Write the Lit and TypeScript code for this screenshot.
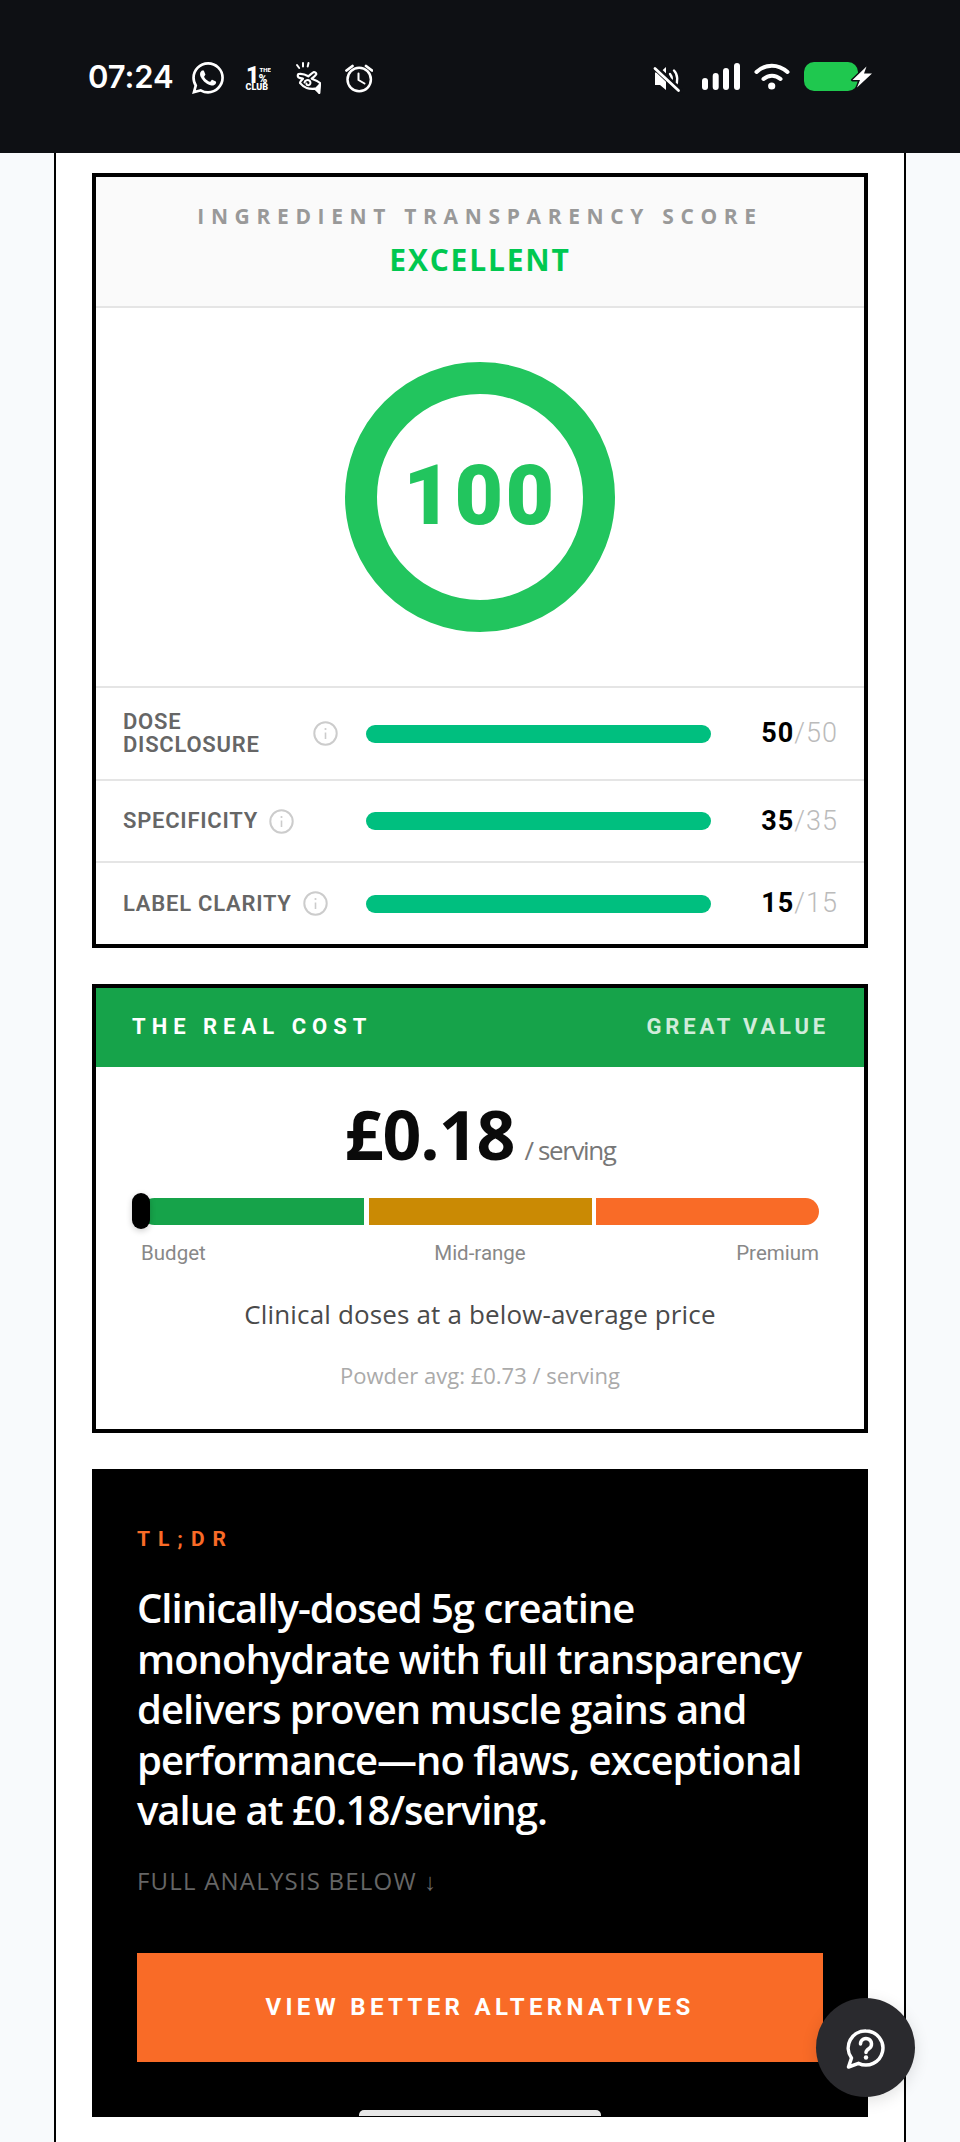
import { LitElement, html, css } from "lit";
import { customElement } from "lit/decorators.js";

const info = html`<svg class="info" viewBox="0 0 25 25"><circle cx="12.5" cy="12.5" r="11.2" fill="none" stroke="#ccc" stroke-width="2"/><circle cx="12.5" cy="8" r="1.1" fill="#ccc"/><path d="M12.5 11.5v6.5" stroke="#ccc" stroke-width="1.6"/></svg>`;

const rows = [
  { label: "DOSE DISCLOSURE", v: 50 },
  { label: "SPECIFICITY", v: 35 },
  { label: "LABEL CLARITY", v: 15 },
];

@customElement("app-root")
export class AppRoot extends LitElement {
  static styles = css`
    :host { display: block; position: relative; height: 2142px; overflow: hidden; background: #f8fafc; font-family: "Open Sans", sans-serif; }
    * { box-sizing: border-box; }
    .status { height: 153px; background: #0e1014; display: flex; justify-content: space-between; padding: 60px 88px 0 88px; align-items: flex-start; color: #fff; }
    .status-left { display: flex; align-items: flex-start; gap: 19px; }
    .status svg { height: 34px; display: block; }
    .time { font: 600 31px/34px Inter, sans-serif; width: 85px; white-space: nowrap; letter-spacing: -0.1px; }
    .page { margin: 0 54px; height: 1989px; border-left: 2px solid #000; border-right: 2px solid #000; background: #fff; padding: 20px 36px 0; display: flex; flex-direction: column; gap: 36px; }
    .card { border: 4px solid #000; background: #fff; }
    .score-head { height: 131px; background: #fafafa; border-bottom: 2px solid #e5e5e5; display: flex; flex-direction: column; align-items: center; padding-top: 24px; }
    .score-title { font-size: 21px; line-height: 30px; font-weight: 700; letter-spacing: 6.65px; color: #999; white-space: nowrap; }
    .score-grade { font-size: 30px; line-height: 40px; margin-top: 9px; font-weight: 700; letter-spacing: 1.8px; color: #00c850; }
    .ring-wrap { height: 378px; display: flex; align-items: center; justify-content: center; }
    .ring { width: 270px; height: 270px; border-radius: 50%; border: 32px solid #22c55e; display: flex; align-items: center; justify-content: center; font: 900 84px/1 Roboto, sans-serif; letter-spacing: 2.5px; color: #22c55e; padding-bottom: 3px; }
    .row { min-height: 82px; border-top: 2px solid #e5e5e5; padding: 22px 27px; display: flex; align-items: center; }
    .row:last-child { min-height: 83px; }
    .row-label { width: 215px; display: flex; align-items: center; gap: 11px; flex: none; }
    .row-name { font: 600 22px/23px Roboto, sans-serif; color: #666; letter-spacing: 0.75px; padding-bottom: 1px; }
    .info { width: 25px; height: 25px; flex: none; display: block; }
    .track { width: 345px; height: 18px; border-radius: 9px; background: #00bf7f; margin-left: 28px; flex: none; }
    .row-score { flex: 1; text-align: right; font: 700 27px/30px Roboto, sans-serif; letter-spacing: 1px; color: #000; margin-right: -1px; padding-bottom: 1px; }
    .row-score span { font-weight: 300; color: #bbb; }
    .cost-head { height: 79px; background: #16a34a; display: flex; justify-content: space-between; align-items: center; padding: 0 35px 2px 36px; font: 700 22px/1 Roboto, sans-serif; color: #fff; }
    .cost-head .l { letter-spacing: 6px; }
    .cost-head .r { letter-spacing: 3.84px; opacity: 0.8; }
    .cost-body { height: 362px; display: flex; flex-direction: column; align-items: center; }
    .price { margin-top: 27px; display: flex; align-items: baseline; gap: 10px; height: 80px; }
    .price b { font-size: 68px; line-height: 80px; font-weight: 700; letter-spacing: -1px; color: #0a0a0a; }
    .price span { font-size: 26px; color: #777; letter-spacing: -1.4px; }
    .scale { position: relative; margin-top: 24px; width: 678px; height: 27px; display: flex; gap: 4.5px; }
    .seg { flex: 1; }
    .seg.a { background: #16a34a; border-radius: 14px 0 0 14px; }
    .seg.b { background: #ca8a04; }
    .seg.c { background: #f96b27; border-radius: 0 14px 14px 0; }
    .marker { position: absolute; left: -9px; top: -5px; width: 18px; height: 36px; border-radius: 9px; background: #000; box-shadow: 0 2px 6px rgba(0,0,0,.2); }
    .scale-labels { width: 678px; margin-top: 15px; display: grid; grid-template-columns: 1fr auto 1fr; font: 400 20.5px/26px Roboto, sans-serif; color: #888; }
    .scale-labels span:last-child { text-align: right; }
    .note { margin-top: 30px; font-size: 26px; line-height: 36px; color: #4a4a4a; letter-spacing: 0.15px; }
    .avg { margin-top: 28px; font-size: 22px; line-height: 30px; color: #aaa; }
    .tldr { background: #000; height: 648px; padding: 0 45px; display: flex; flex-direction: column; color: #fff; }
    .kicker { margin-top: 56px; font: 700 21px/28px Roboto, sans-serif; letter-spacing: 8px; color: #f96b27; }
    .headline { margin: 30px 0 0; font-size: 40px; line-height: 50.5px; font-weight: 600; letter-spacing: -1px; }
    .more { margin-top: 29px; font: 500 24px/32px "Open Sans", sans-serif; letter-spacing: 1.2px; color: #666; }
    .cta { margin-top: 56px; height: 109px; background: #f96b27; display: flex; align-items: center; justify-content: center; font: 700 24px/1 Roboto, sans-serif; letter-spacing: 4.34px; color: #fff; flex: none; }
    .chat { position: absolute; left: 816px; top: 1998px; width: 99px; height: 99px; border-radius: 50%; background: #2a2a2e; box-shadow: 0 4px 16px rgba(0,0,0,.12); display: flex; align-items: center; justify-content: center; }
    .chat svg { width: 48px; height: 48px; display: block; }
    .home { position: absolute; left: 359px; top: 2110px; width: 242px; height: 6px; border-radius: 5px 5px 0 0; background: #e8e8e8; }
  `;

  render() {
    return html`
      <div class="status">
        <div class="status-left">
          <span class="time">07:24</span>
          <svg viewBox="192 60 32 34" style="width:32px"><g transform="translate(192 62) scale(1.3333)"><path fill="#fff" d="M17.472 14.382c-.297-.149-1.758-.867-2.03-.967-.273-.099-.471-.148-.67.15-.197.297-.767.966-.94 1.164-.173.199-.347.223-.644.075-.297-.15-1.255-.463-2.39-1.475-.883-.788-1.48-1.761-1.653-2.059-.173-.297-.018-.458.13-.606.134-.133.298-.347.446-.52.149-.174.198-.298.298-.497.099-.198.05-.371-.025-.52-.075-.149-.669-1.612-.916-2.207-.242-.579-.487-.5-.669-.51-.173-.008-.371-.01-.57-.01-.198 0-.52.074-.792.372-.272.297-1.04 1.016-1.04 2.479 0 1.462 1.065 2.875 1.213 3.074.149.198 2.096 3.2 5.077 4.487.709.306 1.262.489 1.694.625.712.227 1.36.195 1.871.118.571-.085 1.758-.719 2.006-1.413.248-.694.248-1.289.173-1.413-.074-.124-.272-.198-.57-.347m-5.421 7.403h-.004a9.87 9.87 0 01-5.031-1.378l-.361-.214-3.741.982.998-3.648-.235-.374a9.86 9.86 0 01-1.51-5.26c.001-5.45 4.436-9.884 9.888-9.884 2.64 0 5.122 1.03 6.988 2.898a9.825 9.825 0 012.893 6.994c-.003 5.45-4.437 9.884-9.885 9.884m8.413-18.297A11.815 11.815 0 0012.05 0C5.495 0 .16 5.335.157 11.892c0 2.096.547 4.142 1.588 5.945L.057 24l6.305-1.654a11.882 11.882 0 005.683 1.448h.005c6.554 0 11.89-5.335 11.893-11.893a11.821 11.821 0 00-3.48-8.413z"/></g></svg>
          <svg viewBox="243 60 28 34" style="width:28px">
            <g fill="#fff" font-family="Roboto, sans-serif" font-weight="900">
              <text x="246" y="82.500" font-size="23">1</text>
              <text x="259.500" y="71.500" font-size="6">THE</text>
              <text x="258.500" y="82.500" font-size="12">%</text>
              <text x="245.500" y="90" font-size="9">CLUB</text>
            </g>
          </svg>
          <svg viewBox="290 60 31 34" style="width:31px">
            <g fill="none" stroke="#fff" stroke-linecap="round" stroke-linejoin="round">
              <path d="M297 65l2.200 3M303 63v3.500M308.500 63l-.8 3.500" stroke-width="2"/>
              <path d="M298.300 74c3-.6 7 .4 10 2.300 2-1.500 4-3.600 5.700-4.300 2 .2 2.600 1.800 2 2.700-1.200 1.600-3 3-4.300 4 2.800 1 6 2.200 8.300 4.300-.2 3.300-.4 6.500-.7 10-1.500-1.700-3.200-3.300-4.300-4.300-3 .2-6 .1-8.300-.7-3.500-1-5.300-3.300-6.700-5 .2-1.500 1.600-3 3-4.300-2-.3-3.800-.9-4.700-1.400-.6-1-.6-2.300 0-3.300z" stroke-width="2.200"/>
              <path d="M304.500 82.500c.4-2.400 3.600-3.200 5.300-1.500 1.400 1.600.6 4-1.500 4.300-1.200.1-2-.7-1.800-1.700" stroke-width="2"/>
            </g>
            <path d="M315 88l4.500-4.500 1 2-1 7.500z" fill="#fff"/>
          </svg>
          <svg viewBox="339 60 33 34" style="width:33px">
            <g fill="none" stroke="#fff" stroke-linecap="round" stroke-linejoin="round">
              <circle cx="358.200" cy="79.500" r="11.700" stroke-width="2.500"/>
              <path d="M357.500 73.500v6.500l6 3.500" stroke-width="2"/>
              <path d="M345.500 70.500l6-4.500M371 70.500l-6-4.500" stroke-width="2.800"/>
            </g>
          </svg>
        </div>
        <svg viewBox="650 60 222 34" style="width:222px">
          <path d="M655 72.500h5l6-5.500v23l-6-5h-5z" fill="#fff"/>
          <g fill="none" stroke="#fff" stroke-linecap="round">
            <path d="M670 74c2 2.500 2 6.500 1 9M674 70.500c4 4 4 11.500 1.500 15.500" stroke-width="2.400"/>
            <path d="M656 68l24 23" stroke="#0e1014" stroke-width="6"/>
            <path d="M655 68.500l23.500 22" stroke-width="2.800"/>
          </g>
          <g fill="#fff">
            <rect x="702" y="78" width="6" height="12" rx="3"/>
            <rect x="712.700" y="73" width="6" height="17" rx="3"/>
            <rect x="723" y="68" width="6" height="22" rx="3"/>
            <rect x="734" y="63" width="6" height="27" rx="3"/>
            <circle cx="771.700" cy="86" r="3.600"/>
          </g>
          <g fill="none" stroke="#fff" stroke-width="4" stroke-linecap="round">
            <path d="M756.500 72c9-8.500 21.500-8.500 31 0"/>
            <path d="M763.500 79c5-4.500 12-4.500 17 0"/>
          </g>
          <rect x="804" y="62" width="54" height="29" rx="10" fill="#1fc84f"/>
          <path d="M866.500 66.500L852.500 80h7.500l-3 7.500L872 73.500h-8z" fill="#fff" stroke="#0e1014" stroke-width="3" paint-order="stroke" stroke-linejoin="round"/>
        </svg>
      </div>
      <div class="page">
        <section class="card">
          <div class="score-head">
            <div class="score-title">INGREDIENT TRANSPARENCY SCORE</div>
            <div class="score-grade">EXCELLENT</div>
          </div>
          <div class="ring-wrap"><div class="ring">100</div></div>
          ${rows.map(
            (r) => html`<div class="row">
              <div class="row-label"><span class="row-name">${r.label}</span>${info}</div>
              <div class="track"></div>
              <div class="row-score">${r.v}<span>/${r.v}</span></div>
            </div>`
          )}
        </section>
        <section class="card">
          <div class="cost-head"><span class="l">THE REAL COST</span><span class="r">GREAT VALUE</span></div>
          <div class="cost-body">
            <div class="price"><b>£0.18</b><span>/ serving</span></div>
            <div class="scale">
              <div class="seg a"></div><div class="seg b"></div><div class="seg c"></div>
              <div class="marker"></div>
            </div>
            <div class="scale-labels"><span>Budget</span><span>Mid-range</span><span>Premium</span></div>
            <div class="note">Clinical doses at a below-average price</div>
            <div class="avg">Powder avg: £0.73 / serving</div>
          </div>
        </section>
        <section class="tldr">
          <div class="kicker">TL;DR</div>
          <p class="headline">Clinically-dosed 5g creatine monohydrate with full transparency delivers proven muscle gains and performance—no flaws, exceptional value at £0.18/serving.</p>
          <div class="more">FULL ANALYSIS BELOW ↓</div>
          <div class="cta">VIEW BETTER ALTERNATIVES</div>
        </section>
      </div>
      <div class="chat"><svg viewBox="0 0 48 48"><path d="M24 7a17 17 0 1 1-7.500 32.300L6.500 43l3-9A17 17 0 0 1 24 7z" fill="none" stroke="#fff" stroke-width="3.500" stroke-linejoin="round"/><path d="M18.500 20a5.500 5.500 0 1 1 8.600 4.500c-1.800 1.200-3.100 2.100-3.100 4" fill="none" stroke="#fff" stroke-width="3.500" stroke-linecap="round"/><circle cx="24" cy="33.500" r="2.200" fill="#fff"/></svg></div>
      <div class="home"></div>
    `;
  }
}
